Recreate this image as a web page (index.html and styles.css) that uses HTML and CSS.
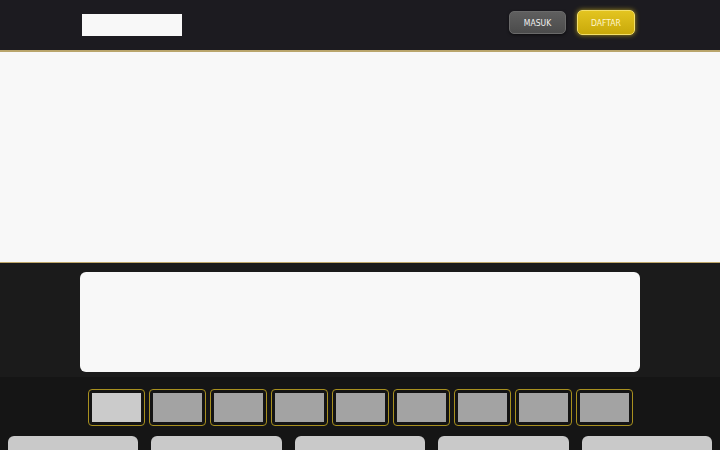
FILE: index.html
```html
<!DOCTYPE html>
<html lang="id">
<head>
<meta charset="utf-8">
<title>Beranda</title>
<link rel="stylesheet" href="styles.css">
</head>
<body>
<header class="topbar">
  <div class="logo"></div>
  <div class="actions">
    <a class="btn btn-login" href="#">MASUK</a>
    <a class="btn btn-register" href="#">DAFTAR</a>
  </div>
</header>
<section class="hero"></section>
<section class="promo">
  <div class="promo-card"></div>
</section>
<section class="games">
  <div class="tabs">
    <div class="tab active"><div class="tab-img"></div></div>
    <div class="tab"><div class="tab-img"></div></div>
    <div class="tab"><div class="tab-img"></div></div>
    <div class="tab"><div class="tab-img"></div></div>
    <div class="tab"><div class="tab-img"></div></div>
    <div class="tab"><div class="tab-img"></div></div>
    <div class="tab"><div class="tab-img"></div></div>
    <div class="tab"><div class="tab-img"></div></div>
    <div class="tab"><div class="tab-img"></div></div>
  </div>
  <div class="cards">
    <div class="card"></div>
    <div class="card"></div>
    <div class="card"></div>
    <div class="card"></div>
    <div class="card"></div>
  </div>
</section>
</body>
</html>
```
FILE: styles.css
```css
* { box-sizing: border-box; }
html, body { margin: 0; padding: 0; }
body {
  background: #151515;
  font-family: "DejaVu Sans Condensed", "DejaVu Sans", sans-serif;
  overflow: hidden;
}
.topbar {
  height: 52px;
  background: #1c1b20;
  border-bottom: 2px solid #b9a56c;
  display: flex;
  align-items: flex-start;
  justify-content: space-between;
  padding: 0 85px 0 82px;
}
.logo {
  width: 100px;
  height: 22px;
  background: #f8f8f8;
  margin-top: 14px;
}
.actions {
  display: flex;
  gap: 11px;
  align-items: center;
  margin-top: 10px;
}
.btn {
  display: flex;
  align-items: center;
  justify-content: center;
  height: 23px;
  border-radius: 5px;
  font-size: 8.5px;
  text-decoration: none;
}
.btn-login {
  width: 57px;
  background: linear-gradient(#5f5f5f, #4b4b4b);
  border: 1px solid #6a6a6a;
  color: #f0f0f0;
  box-shadow: 0 1px 3px rgba(0,0,0,0.6);
}
.btn-register {
  width: 58px;
  height: 25px;
  background: linear-gradient(#e3c420, #c9a90a);
  border: 1px solid #f3df6a;
  color: #fff6cc;
  box-shadow: 0 0 5px rgba(230, 200, 30, 0.7);
}
.hero {
  height: 211px;
  background: #f8f8f8;
  border-bottom: 1px solid #bfa76a;
}
.promo {
  background: #1b1b1b;
  padding: 9px 80px 5px;
  height: 114px;
}
.promo-card {
  height: 100px;
  background: #f8f8f8;
  border-radius: 6px;
}
.games {
  background: #151515;
  padding-top: 12px;
}
.tabs {
  display: flex;
  justify-content: center;
  gap: 4px;
}
.tab {
  width: 57px;
  height: 37px;
  border: 1px solid #a8901f;
  border-radius: 4px;
  padding: 3px;
  background: #141414;
}
.tab-img {
  width: 100%;
  height: 100%;
  background: #a3a3a3;
}
.tab.active .tab-img { background: #cbcbcb; }
.cards {
  display: grid;
  grid-template-columns: repeat(5, 1fr);
  gap: 13px;
  padding: 10px 8px 0;
}
.card {
  height: 14px;
  background: #c9c9c9;
  border-radius: 6px 6px 0 0;
}
```
